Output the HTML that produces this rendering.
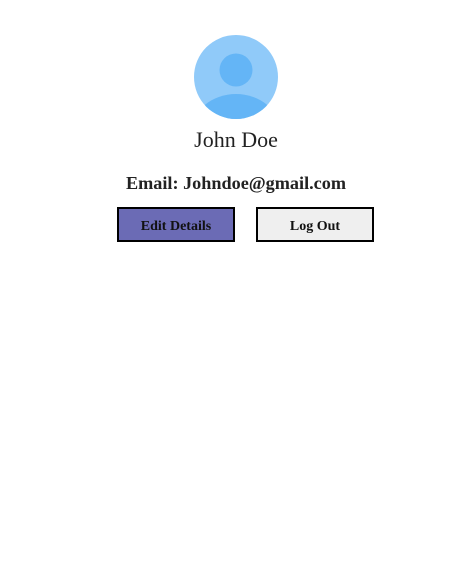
<!DOCTYPE html>
<html><head><style>
body{margin:0;width:472px;height:582px;background:#fff;font-family:"Liberation Serif",serif;color:#222}
.av{position:absolute;left:194px;top:35px}
.name{position:absolute;left:0;width:472px;top:127px;text-align:center;font-size:22px}
.email{position:absolute;left:0;width:472px;top:173px;text-align:center;font-size:18.2px;font-weight:bold}
.btn{position:absolute;top:207px;width:114px;height:31px;border:2px solid #000;box-sizing:content-box;font-weight:bold;font-size:14px;text-align:center;line-height:35px;color:#111}
</style></head><body>
<svg class="av" width="84" height="84" viewBox="0 0 84 84">
<defs><clipPath id="c"><circle cx="42" cy="42" r="42"/></clipPath></defs>
<circle cx="42" cy="42" r="42" fill="#90caf9"/>
<circle cx="42" cy="35" r="16.5" fill="#64b5f6"/>
<ellipse cx="42" cy="96" rx="44" ry="37" fill="#64b5f6" clip-path="url(#c)"/>
</svg>
<div class="name">John Doe</div>
<div class="email">Email: Johndoe@gmail.com</div>
<div class="btn" style="left:117px;background:#6b6bb5">Edit Details</div>
<div class="btn" style="left:256px;background:#efefef">Log Out</div>
</body></html>
